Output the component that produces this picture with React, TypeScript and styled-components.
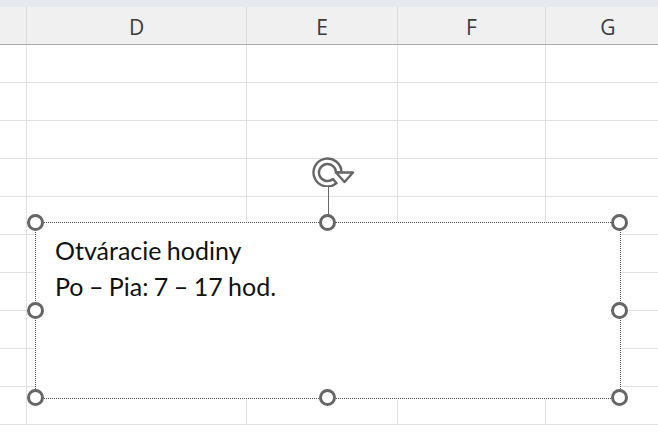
import React from "react";
import styled, { createGlobalStyle } from "styled-components";

const GlobalStyle = createGlobalStyle`
  html, body {
    margin: 0;
    padding: 0;
    background: #ffffff;
    overflow: hidden;
  }
`;

const columns = [
  { label: "", width: 26 },
  { label: "D", width: 220 },
  { label: "E", width: 151 },
  { label: "F", width: 148 },
  { label: "G", width: 125 },
];

const Sheet = styled.div`
  position: relative;
  width: 658px;
  height: 436px;
  overflow: hidden;
  background: #fff;
`;

const TopBand = styled.div`
  height: 7px;
  background: #e6e9ee;
`;

const HeaderRow = styled.div`
  display: flex;
  height: 37px;
  background: #f0f0f0;
  border-bottom: 1px solid #ababab;
`;

const HeaderCell = styled.div<{ $w: number; $first?: boolean }>`
  flex: 0 0 ${(p) => p.$w}px;
  box-sizing: border-box;
  border-left: ${(p) => (p.$first ? "none" : "1px solid #dadada")};
  display: flex;
  align-items: center;
  justify-content: center;
  font-family: "Open Sans", "Noto Sans", sans-serif;
  font-size: 21px;
  color: #3a3a3a;
  padding-top: 2px;
`;

const Row = styled.div`
  display: flex;
  height: 38px;
  box-sizing: border-box;
  border-bottom: 1px solid #e1e1e1;
`;

const Cell = styled.div<{ $w: number; $first?: boolean }>`
  flex: 0 0 ${(p) => p.$w}px;
  box-sizing: border-box;
  border-left: ${(p) => (p.$first ? "none" : "1px solid #e1e1e1")};
`;

// floating text box, placed on the sheet canvas
const Shape = styled.div`
  position: absolute;
  left: 35px;
  top: 222px;
  width: 586px;
  height: 177px;
  box-sizing: border-box;
  border: 1px dotted #555;
  background: #fff;
  padding: 9px 0 0 19px;
`;

const ShapeText = styled.div`
  font-family: "Lato", "Liberation Sans", sans-serif;
  font-size: 25px;
  line-height: 36px;
  word-spacing: -1px;
  color: #111;
`;

const Handle = styled.div<{ $x: string; $y: string }>`
  position: absolute;
  left: ${(p) => p.$x};
  top: ${(p) => p.$y};
  width: 17px;
  height: 17px;
  margin: -9px 0 0 -9px;
  box-sizing: border-box;
  border-radius: 50%;
  border: 3px solid #666;
  background: #fff;
`;

const RotateGrip = styled.div`
  position: absolute;
  left: 50%;
  top: -68px;
  transform: translateX(-17px);
  display: flex;
  flex-direction: column;
  align-items: flex-start;
`;

const Connector = styled.div`
  width: 1px;
  height: 29px;
  margin-left: 17px;
  background: #666;
`;

const handles: [string, string][] = [
  ["0%", "0%"],
  ["50%", "0%"],
  ["100%", "0%"],
  ["0%", "50%"],
  ["100%", "50%"],
  ["0%", "100%"],
  ["50%", "100%"],
  ["100%", "100%"],
];

export default function App() {
  return (
    <>
      <GlobalStyle />
      <Sheet>
        <TopBand />
        <HeaderRow>
          {columns.map((c, i) => (
            <HeaderCell key={i} $w={c.width} $first={i === 0}>
              {c.label}
            </HeaderCell>
          ))}
        </HeaderRow>
        {Array.from({ length: 10 }).map((_, r) => (
          <Row key={r}>
            {columns.map((c, i) => (
              <Cell key={i} $w={c.width} $first={i === 0} />
            ))}
          </Row>
        ))}
        <Shape>
          <ShapeText>Otváracie hodiny</ShapeText>
          <ShapeText>Po – Pia: 7 – 17 hod.</ShapeText>
          <RotateGrip>
            <svg width="44" height="32" viewBox="0 0 44 32" style={{ display: "block" }}>
              {/* outlined ring, open at the lower right */}
              <path
                d="M30.5 17.5 A14 14 0 1 0 25.5 28.2 L22 24 A8.5 8.5 0 1 1 25 17.5 Z"
                fill="#fff"
                stroke="#666"
                strokeWidth="2.4"
                strokeLinejoin="round"
              />
              <path
                d="M25 17.5 L42 17.5 L33.5 27 Z"
                fill="#fff"
                stroke="#666"
                strokeWidth="2.4"
                strokeLinejoin="round"
              />
            </svg>
            <Connector />
          </RotateGrip>
          {handles.map(([x, y], i) => (
            <Handle key={i} $x={x} $y={y} />
          ))}
        </Shape>
      </Sheet>
    </>
  );
}
